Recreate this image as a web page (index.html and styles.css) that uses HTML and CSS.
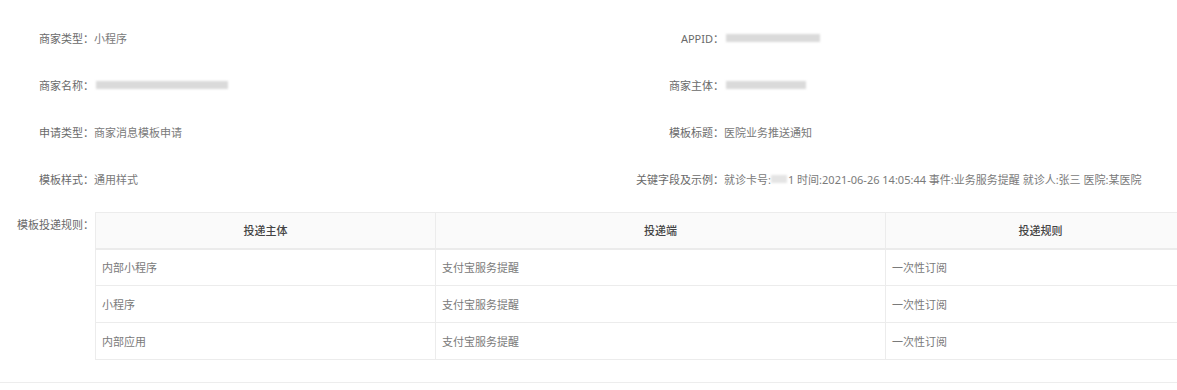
FILE: index.html
```html
<!DOCTYPE html>
<html lang="zh-CN">
<head>
<meta charset="utf-8">
<link rel="stylesheet" href="styles.css">
</head>
<body>
<div class="detail">
  <div class="grid">
    <div class="item"><span class="label label-l">商家类型：</span><span class="value">小程序</span></div>
    <div class="item"><span class="label label-r">APPID：</span><span class="value"><span class="mask" style="width:94px"></span></span></div>
    <div class="item"><span class="label label-l">商家名称：</span><span class="value"><span class="mask" style="width:132px"></span></span></div>
    <div class="item"><span class="label label-r">商家主体：</span><span class="value"><span class="mask" style="width:80px"></span></span></div>
    <div class="item"><span class="label label-l">申请类型：</span><span class="value">商家消息模板申请</span></div>
    <div class="item"><span class="label label-r">模板标题：</span><span class="value">医院业务推送通知</span></div>
    <div class="item"><span class="label label-l">模板样式：</span><span class="value">通用样式</span></div>
    <div class="item"><span class="label label-r">关键字段及示例：</span><span class="value">就诊卡号:<span class="mask mask-inline" style="width:16px"></span>1 时间:2021-06-26 14:05:44 事件:业务服务提醒 就诊人:张三 医院:某医院</span></div>
  </div>
  <div class="rules">
    <div class="label label-l rules-label">模板投递规则：</div>
    <table class="table">
      <thead>
        <tr><th class="c1">投递主体</th><th class="c2">投递端</th><th class="c3">投递规则</th></tr>
      </thead>
      <tbody>
        <tr><td>内部小程序</td><td>支付宝服务提醒</td><td>一次性订阅</td></tr>
        <tr><td>小程序</td><td>支付宝服务提醒</td><td>一次性订阅</td></tr>
        <tr><td>内部应用</td><td>支付宝服务提醒</td><td>一次性订阅</td></tr>
      </tbody>
    </table>
  </div>
  <div class="divider"></div>
</div>
</body>
</html>
```
FILE: styles.css
```css
html, body {
  margin: 0;
  padding: 0;
  background: #fff;
  overflow: hidden;
}
body {
  width: 1177px;
  height: 390px;
  font-family: "Noto Sans", "Noto Sans CJK SC", sans-serif;
  font-size: 11px;
  color: #777;
}
.detail {
  padding-top: 14px;
}
.grid {
  display: grid;
  grid-template-columns: 588px 1fr;
  grid-auto-rows: 47px;
}
.item {
  display: flex;
  align-items: center;
  white-space: nowrap;
}
.label {
  color: #6a6a6a;
  text-align: right;
  flex-shrink: 0;
}
.label-l { width: 94px; }
.label-r { width: 136px; }
.value {
  color: #7a7a7a;
  display: flex;
  align-items: center;
}
.mask {
  display: inline-block;
  height: 8px;
  background: #dadada;
  filter: blur(1.2px);
  margin-left: 2px;
}
.mask-inline {
  margin: 0 1px 0 0;
  background: #e4e4e4;
}
.rules {
  display: flex;
  align-items: flex-start;
  margin-top: 10px;
}
.rules-label {
  padding-top: 6px;
  line-height: 14px;
  margin-right: 1px;
}
.table {
  border-collapse: collapse;
  width: 1100px;
  table-layout: fixed;
  flex-shrink: 0;
}
.table th, .table td {
  border: 1px solid #ececec;
  height: 37px;
  padding: 0 6px;
  box-sizing: border-box;
}
.table th {
  height: 36px;
  background: #fafafa;
  color: #444;
  font-weight: 500;
  text-align: center;
  border-bottom: 2px solid #ebebeb;
}
.table td {
  color: #7a7a7a;
  text-align: left;
}
.c1 { width: 340px; }
.c2 { width: 450px; }
.c3 { width: 310px; }
.divider {
  margin-top: 22px;
  height: 1px;
  background: #ededed;
}
```
